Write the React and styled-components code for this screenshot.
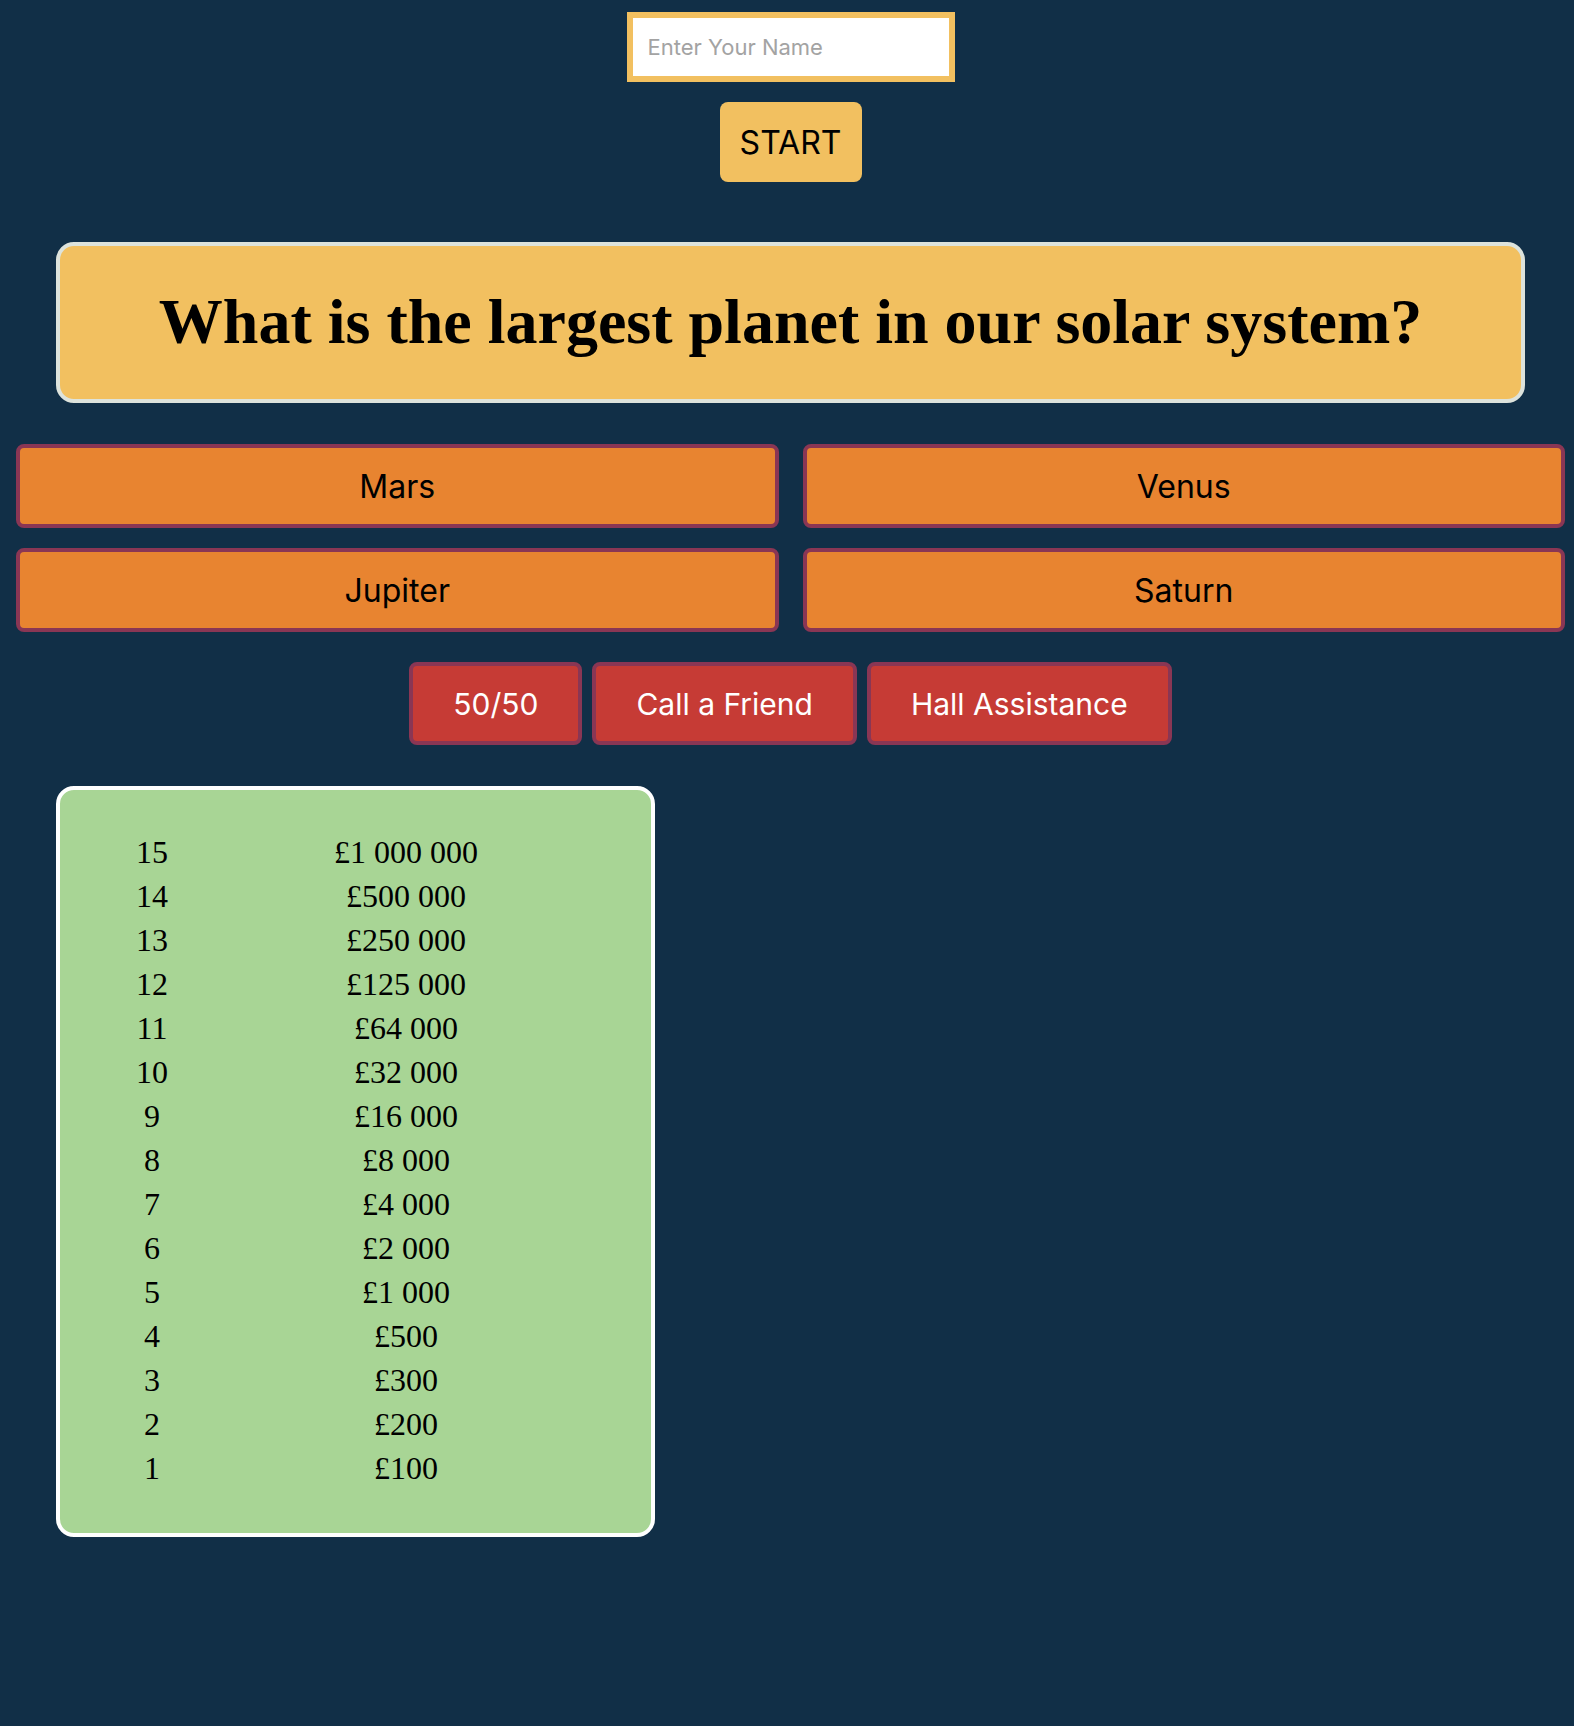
import React from "react";
import styled, { createGlobalStyle } from "styled-components";

const GlobalStyle = createGlobalStyle`
  html, body {
    margin: 0;
    padding: 0;
    background: #112f47;
    min-height: 100%;
  }
  body {
    min-height: 1726px;
    font-family: "Liberation Serif", serif;
  }
`;

const Page = styled.main`
  box-sizing: border-box;
  width: 100%;
  min-height: 1726px;
  padding: 12px 9px 40px 16px;
  display: flex;
  flex-direction: column;
  background: #112f47;
`;

const Center = styled.div`
  display: flex;
  flex-direction: column;
  align-items: center;
`;

const NameInput = styled.input`
  box-sizing: border-box;
  width: 328px;
  height: 70px;
  border: 6px solid #f2c060;
  background: #ffffff;
  padding: 0 15px;
  font-family: "Inter", "Noto Sans", sans-serif;
  font-size: 22px;
  color: #222;
  outline: none;
  &::placeholder {
    color: #a3a3a3;
  }
`;

const StartButton = styled.button`
  box-sizing: border-box;
  margin-top: 20px;
  width: 142px;
  height: 80px;
  border: none;
  border-radius: 8px;
  background: #f2c060;
  color: #000;
  font-family: "Inter", "Noto Sans", sans-serif;
  font-size: 32px;
  cursor: pointer;
`;

const QuestionBox = styled.section`
  box-sizing: border-box;
  margin: 60px 40px 0;
  border: 4px solid #dde3dc;
  border-radius: 18px;
  background: #f2c060;
  padding: 39px 20px 40px;
  text-align: center;
`;

const QuestionText = styled.h1`
  margin: 0;
  font-family: "Liberation Serif", "Times New Roman", serif;
  font-weight: 700;
  font-size: 64px;
  line-height: normal;
  color: #000;
`;

const AnswerGrid = styled.div`
  margin-top: 41px;
  display: grid;
  grid-template-columns: 1fr 1fr;
  column-gap: 24px;
  row-gap: 20px;
`;

const AnswerButton = styled.button`
  box-sizing: border-box;
  height: 84px;
  border: 4px solid #8a3654;
  border-radius: 8px;
  background: #e88430;
  color: #000;
  font-family: "Inter", "Noto Sans", sans-serif;
  font-size: 32px;
  cursor: pointer;
  display: flex;
  align-items: center;
  justify-content: center;
`;

const LifelineRow = styled.div`
  margin-top: 30px;
  display: flex;
  justify-content: center;
  gap: 10px;
`;

const LifelineButton = styled.button`
  box-sizing: border-box;
  height: 83px;
  padding: 0 40px;
  border: 4px solid #8a3654;
  border-radius: 8px;
  background: #c63b35;
  color: #ffffff;
  font-family: "Inter", "Noto Sans", sans-serif;
  font-size: 30px;
  cursor: pointer;
`;

const PrizePanel = styled.section`
  box-sizing: border-box;
  margin: 41px 0 0 40px;
  width: 599px;
  border: 4px solid #ffffff;
  border-radius: 18px;
  background: #a8d595;
  padding: 40px 0 43px 60px;
`;

const PrizeList = styled.div`
  display: grid;
  grid-template-columns: 64px 444px;
  font-family: "Liberation Serif", "Times New Roman", serif;
  font-size: 32px;
  line-height: 44px;
  color: #000;
`;

const Cell = styled.div`
  text-align: center;
  white-space: nowrap;
`;

const prizes = [
  [15, "£1 000 000"],
  [14, "£500 000"],
  [13, "£250 000"],
  [12, "£125 000"],
  [11, "£64 000"],
  [10, "£32 000"],
  [9, "£16 000"],
  [8, "£8 000"],
  [7, "£4 000"],
  [6, "£2 000"],
  [5, "£1 000"],
  [4, "£500"],
  [3, "£300"],
  [2, "£200"],
  [1, "£100"],
];

export default function App() {
  return (
    <>
      <GlobalStyle />
      <Page>
        <Center>
          <NameInput type="text" placeholder="Enter Your Name" />
          <StartButton>START</StartButton>
        </Center>
        <QuestionBox>
          <QuestionText>What is the largest planet in our solar system?</QuestionText>
        </QuestionBox>
        <AnswerGrid>
          <AnswerButton>Mars</AnswerButton>
          <AnswerButton>Venus</AnswerButton>
          <AnswerButton>Jupiter</AnswerButton>
          <AnswerButton>Saturn</AnswerButton>
        </AnswerGrid>
        <LifelineRow>
          <LifelineButton>50/50</LifelineButton>
          <LifelineButton>Call a Friend</LifelineButton>
          <LifelineButton>Hall Assistance</LifelineButton>
        </LifelineRow>
        <PrizePanel>
          <PrizeList>
            {prizes.map(([n, amount]) => (
              <React.Fragment key={n}>
                <Cell>{n}</Cell>
                <Cell>{amount}</Cell>
              </React.Fragment>
            ))}
          </PrizeList>
        </PrizePanel>
      </Page>
    </>
  );
}
